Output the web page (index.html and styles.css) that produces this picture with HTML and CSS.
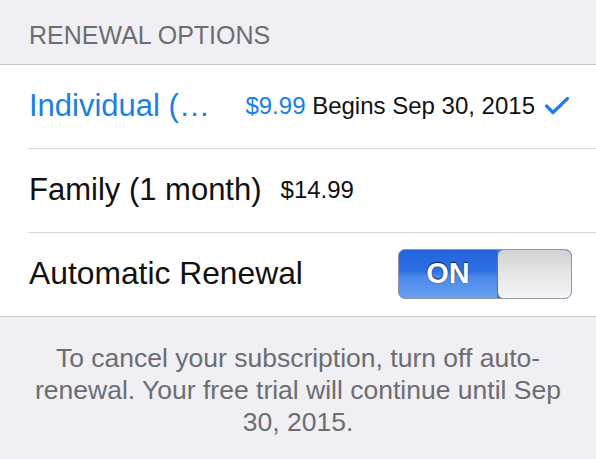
FILE: index.html
```html
<!DOCTYPE html>
<html>
<head>
<meta charset="utf-8">
<link rel="stylesheet" href="styles.css">
</head>
<body>
<div class="screen">
  <div class="section-header">RENEWAL OPTIONS</div>
  <div class="group">
    <div class="row">
      <span class="label blue">Individual (…</span>
      <span class="detail"><span class="blue">$9.99</span> Begins Sep 30, 2015</span>
      <svg class="check" width="26" height="20" viewBox="0 0 26 20"><polyline points="2.5,10 9,16.5 23.5,2.5" fill="none" stroke="#1a80e5" stroke-width="3.2" stroke-linecap="round" stroke-linejoin="round"/></svg>
    </div>
    <div class="row">
      <span class="label">Family (1 month)</span>
      <span class="price">$14.99</span>
    </div>
    <div class="row last">
      <span class="label wide">Automatic Renewal</span>
      <div class="switch">
        <div class="switch-on">ON</div>
        <div class="switch-knob"></div>
      </div>
    </div>
  </div>
  <div class="footer">To cancel your subscription, turn off auto-<br>renewal. Your free trial will continue until Sep<br>30, 2015.</div>
</div>
</body>
</html>
```
FILE: styles.css
```css
html, body {
  margin: 0;
  padding: 0;
  background: #efeff4;
}
.screen {
  width: 596px;
  height: 459px;
  overflow: hidden;
  font-family: "Liberation Sans", Arial, sans-serif;
  background: #efeff4;
}
.section-header {
  height: 65px;
  box-sizing: border-box;
  padding: 20px 0 0 29px;
  font-size: 25px;
  line-height: 30px;
  color: #6d6d72;
  border-bottom: 1px solid #c8c7cc;
}
.group {
  background: #fff;
  border-bottom: 1px solid #c8c7cc;
}
.row {
  height: 84px;
  box-sizing: border-box;
  display: flex;
  align-items: center;
  margin-left: 28px;
  padding: 0 24px 2px 1px;
  border-bottom: 1px solid #d8d8dc;
  color: #111;
}
.row.last {
  border-bottom: none;
  height: 83px;
}
.label {
  font-size: 31px;
  white-space: nowrap;
}
.label.wide {
  font-size: 31.8px;
}
.blue {
  color: #1a80e5;
}
.detail {
  margin-left: auto;
  font-size: 24px;
  white-space: nowrap;
}
.check {
  margin-left: 9px;
  margin-right: 2px;
}
.price {
  margin-left: 19px;
  font-size: 24px;
}
.switch {
  margin-left: auto;
  width: 174px;
  height: 50px;
  box-sizing: border-box;
  display: flex;
  border: 1px solid #8d97a8;
  border-radius: 7px;
  overflow: hidden;
  background: #3b7fe6;
}
.switch-on {
  flex: 1;
  display: flex;
  align-items: center;
  justify-content: center;
  color: #fff;
  font-weight: bold;
  font-size: 29px;
  text-shadow: 0 -1px 1px rgba(0, 0, 40, 0.7), 0 0 1px rgba(0, 0, 40, 0.6);
  background: linear-gradient(#2264dc 0%, #2f70e2 45%, #4a88ea 55%, #66a0f0 100%);
}
.switch-knob {
  width: 74px;
  box-sizing: border-box;
  border-left: 1px solid #6b7280;
  border-radius: 6px;
  background: linear-gradient(#d2d2d2 0%, #e6e6e6 50%, #f4f4f4 100%);
  box-shadow: inset 0 -1px 0 #fff;
}
.footer {
  padding-top: 25px;
  text-align: center;
  font-size: 26.5px;
  line-height: 32px;
  color: #6d6d72;
}
```
